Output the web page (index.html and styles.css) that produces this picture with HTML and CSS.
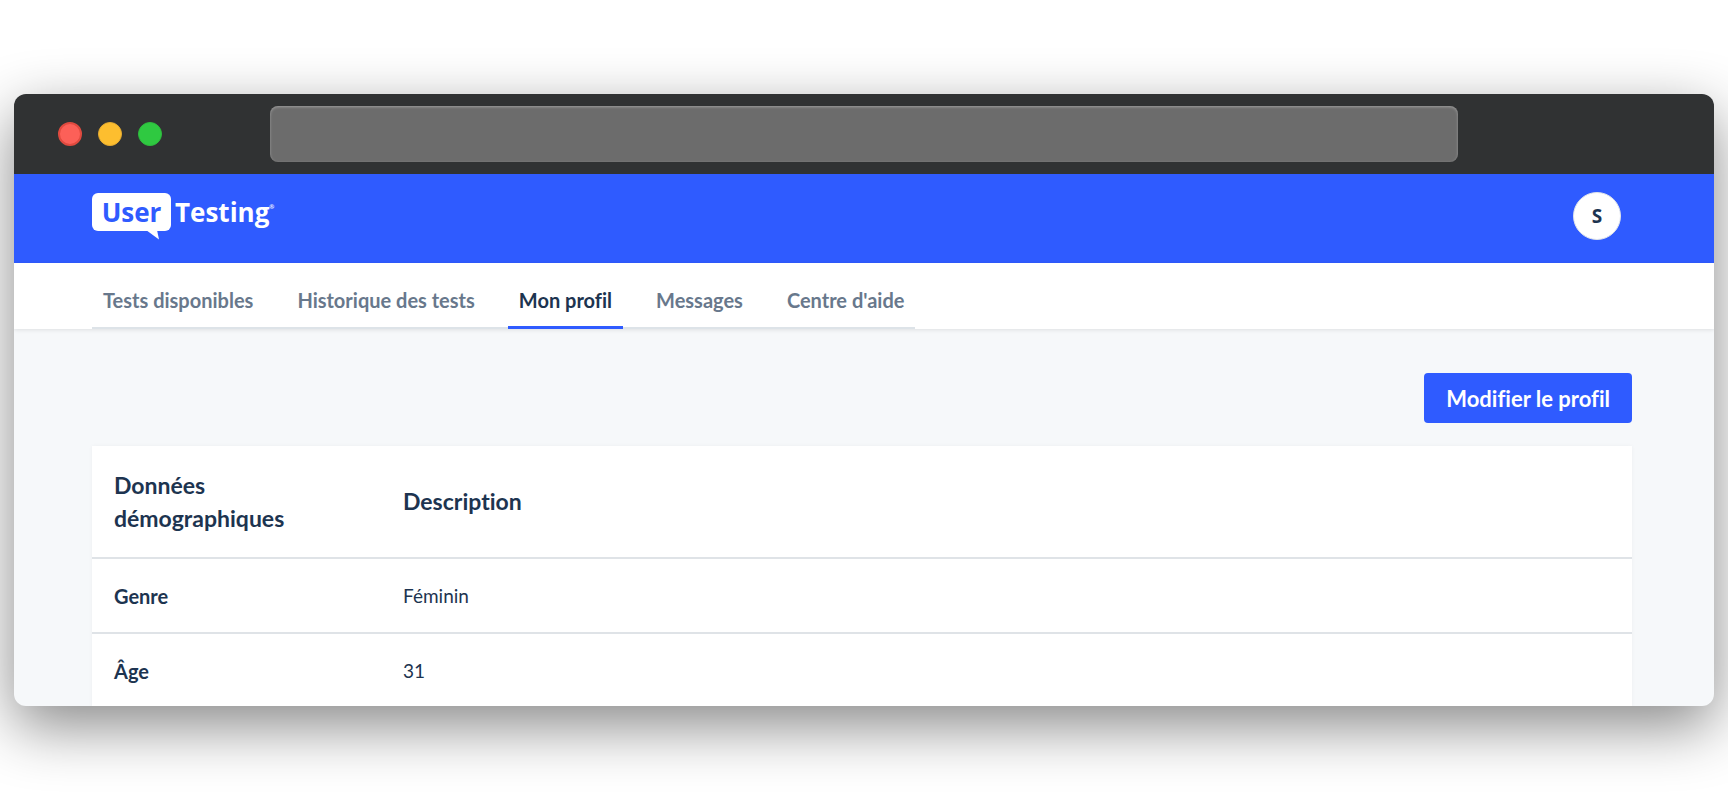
FILE: index.html
```html
<!DOCTYPE html>
<html lang="fr">
<head>
    <meta charset="UTF-8">
    <meta name="viewport" content="width=device-width, initial-scale=1.0">
    <title>UserTesting - Mon profil</title>
    <link rel="stylesheet" href="styles.css">
</head>
<body>
    <div class="window">
        <div class="titlebar">
            <div class="dots">
                <span class="dot red"></span>
                <span class="dot yellow"></span>
                <span class="dot green"></span>
            </div>
            <input type="text" class="address" aria-label="Adresse">
        </div>

        <header class="header">
            <a href="#" class="logo">
                <span class="logo-user">User
                    <svg class="logo-tail" width="14" height="10" viewBox="0 0 14 10"><path d="M0 0H11L13 9.500Z" fill="#fff"/></svg>
                </span>
                <span class="logo-testing">Testing</span>
                <span class="logo-mark">®</span>
            </a>
            <button type="button" class="avatar">S</button>
        </header>

        <nav class="nav">
            <div class="tabs">
                <a href="#">Tests disponibles</a>
                <a href="#">Historique des tests</a>
                <a href="#" class="active">Mon profil</a>
                <a href="#">Messages</a>
                <a href="#">Centre d'aide</a>
            </div>
        </nav>

        <main class="content">
            <div class="actions">
                <button type="button" class="edit">Modifier le profil</button>
            </div>
            <table class="profile">
                <thead>
                    <tr>
                        <th scope="col" class="label">Données démographiques</th>
                        <th scope="col">Description</th>
                    </tr>
                </thead>
                <tbody>
                    <tr>
                        <th scope="row">Genre</th>
                        <td>Féminin</td>
                    </tr>
                    <tr>
                        <th scope="row">Âge</th>
                        <td>31</td>
                    </tr>
                </tbody>
            </table>
        </main>
    </div>
</body>
</html>
```

FILE: styles.css
```css
* {
    box-sizing: border-box;
}

body {
    font-family: Lato, "Open Sans", sans-serif;
    font-variant-ligatures: none;
    background: #fff;
    color: #1d3450;
    margin: 0;
    padding: 94px 14px;
}

.window {
    border-radius: 12px;
    overflow: hidden;
    background: #f6f8fa;
    box-shadow: 0 20px 60px rgba(0,0,0,0.47);
}

.titlebar {
    display: flex;
    align-items: center;
    height: 80px;
    padding: 0 256px 0 44px;
    background: #303233;
}

.dots {
    display: flex;
    gap: 16px;
    width: 212px;
}

.dot {
    width: 24px;
    height: 24px;
    border-radius: 50%;
}

.red {
    background: #fc6058;
    border: 2px solid #e04a3f;
}

.yellow {
    background: #fdbe2f;
    border: 1px solid #e5ab30;
}

.green {
    background: #2fc941;
    border: 1px solid #2dbb3d;
}

.address {
    flex: 1;
    height: 56px;
    padding: 0 16px;
    border: none;
    border-radius: 8px;
    background: #6c6c6c;
    box-shadow: inset 0 1px 3px rgba(255,255,255,0.35);
    color: #fff;
}

.header {
    display: flex;
    justify-content: space-between;
    align-items: flex-start;
    height: 89px;
    padding: 18px 93px 0 78px;
    background: #2f5bff;
}

.logo {
    display: flex;
    color: #fff;
    font-family: "Open Sans", sans-serif;
    font-size: 26px;
    font-weight: bold;
    line-height: 38px;
    text-decoration: none;
}

.logo-user {
    position: relative;
    width: 79px;
    height: 38px;
    margin-top: 1px;
    border-radius: 6px;
    background: #fff;
    color: #2f5bff;
    text-align: center;
}

.logo-tail {
    position: absolute;
    top: 37px;
    right: 11px;
}

.logo-testing {
    margin: 1px 0 0 4px;
}

.logo-mark {
    font-size: 6px;
    line-height: 30px;
}

.avatar {
    width: 48px;
    height: 48px;
    padding: 0;
    border: 1px solid #dde2ea;
    border-radius: 50%;
    background: #fff;
    color: #1d3450;
    font-family: "Open Sans", sans-serif;
    font-size: 19px;
    font-weight: bold;
    cursor: pointer;
}

.nav {
    position: relative;
    height: 66px;
    padding: 0 78px;
    background: #fff;
    box-shadow: 0 1px 4px rgba(0,0,0,0.1);
}

.tabs {
    display: inline-flex;
    gap: 22px;
    height: 66px;
    border-bottom: 2px solid #dde3e8;
}

.tabs a {
    height: 66px;
    padding: 0 11px;
    color: #68788c;
    font-size: 20px;
    font-weight: bold;
    line-height: 74px;
    text-decoration: none;
}

.tabs .active {
    color: #1d3450;
    border-bottom: 3px solid #2f5bff;
}

.content {
    height: 377px;
    padding: 44px 82px 0 78px;
    overflow: hidden;
}

.actions {
    display: flex;
    justify-content: flex-end;
    margin-bottom: 23px;
}

.edit {
    height: 50px;
    padding: 0 22px;
    border: none;
    border-radius: 4px;
    background: #2f5bff;
    color: #fff;
    font-family: inherit;
    font-variant-ligatures: none;
    font-size: 22px;
    font-weight: bold;
    cursor: pointer;
}

.profile {
    width: 100%;
    border-collapse: collapse;
    background: #fff;
    box-shadow: 0 0 4px rgba(0,0,0,0.04);
    font-size: 20px;
    line-height: 28px;
    text-align: left;
}

.profile th,
.profile td {
    height: 75px;
    padding: 0 22px;
    border-bottom: 2px solid #dfe3e7;
}

.profile td {
    font-size: 19px;
}

.profile thead th {
    height: 112px;
    font-size: 23px;
    line-height: 33px;
}

.profile .label {
    width: 289px;
}
```
